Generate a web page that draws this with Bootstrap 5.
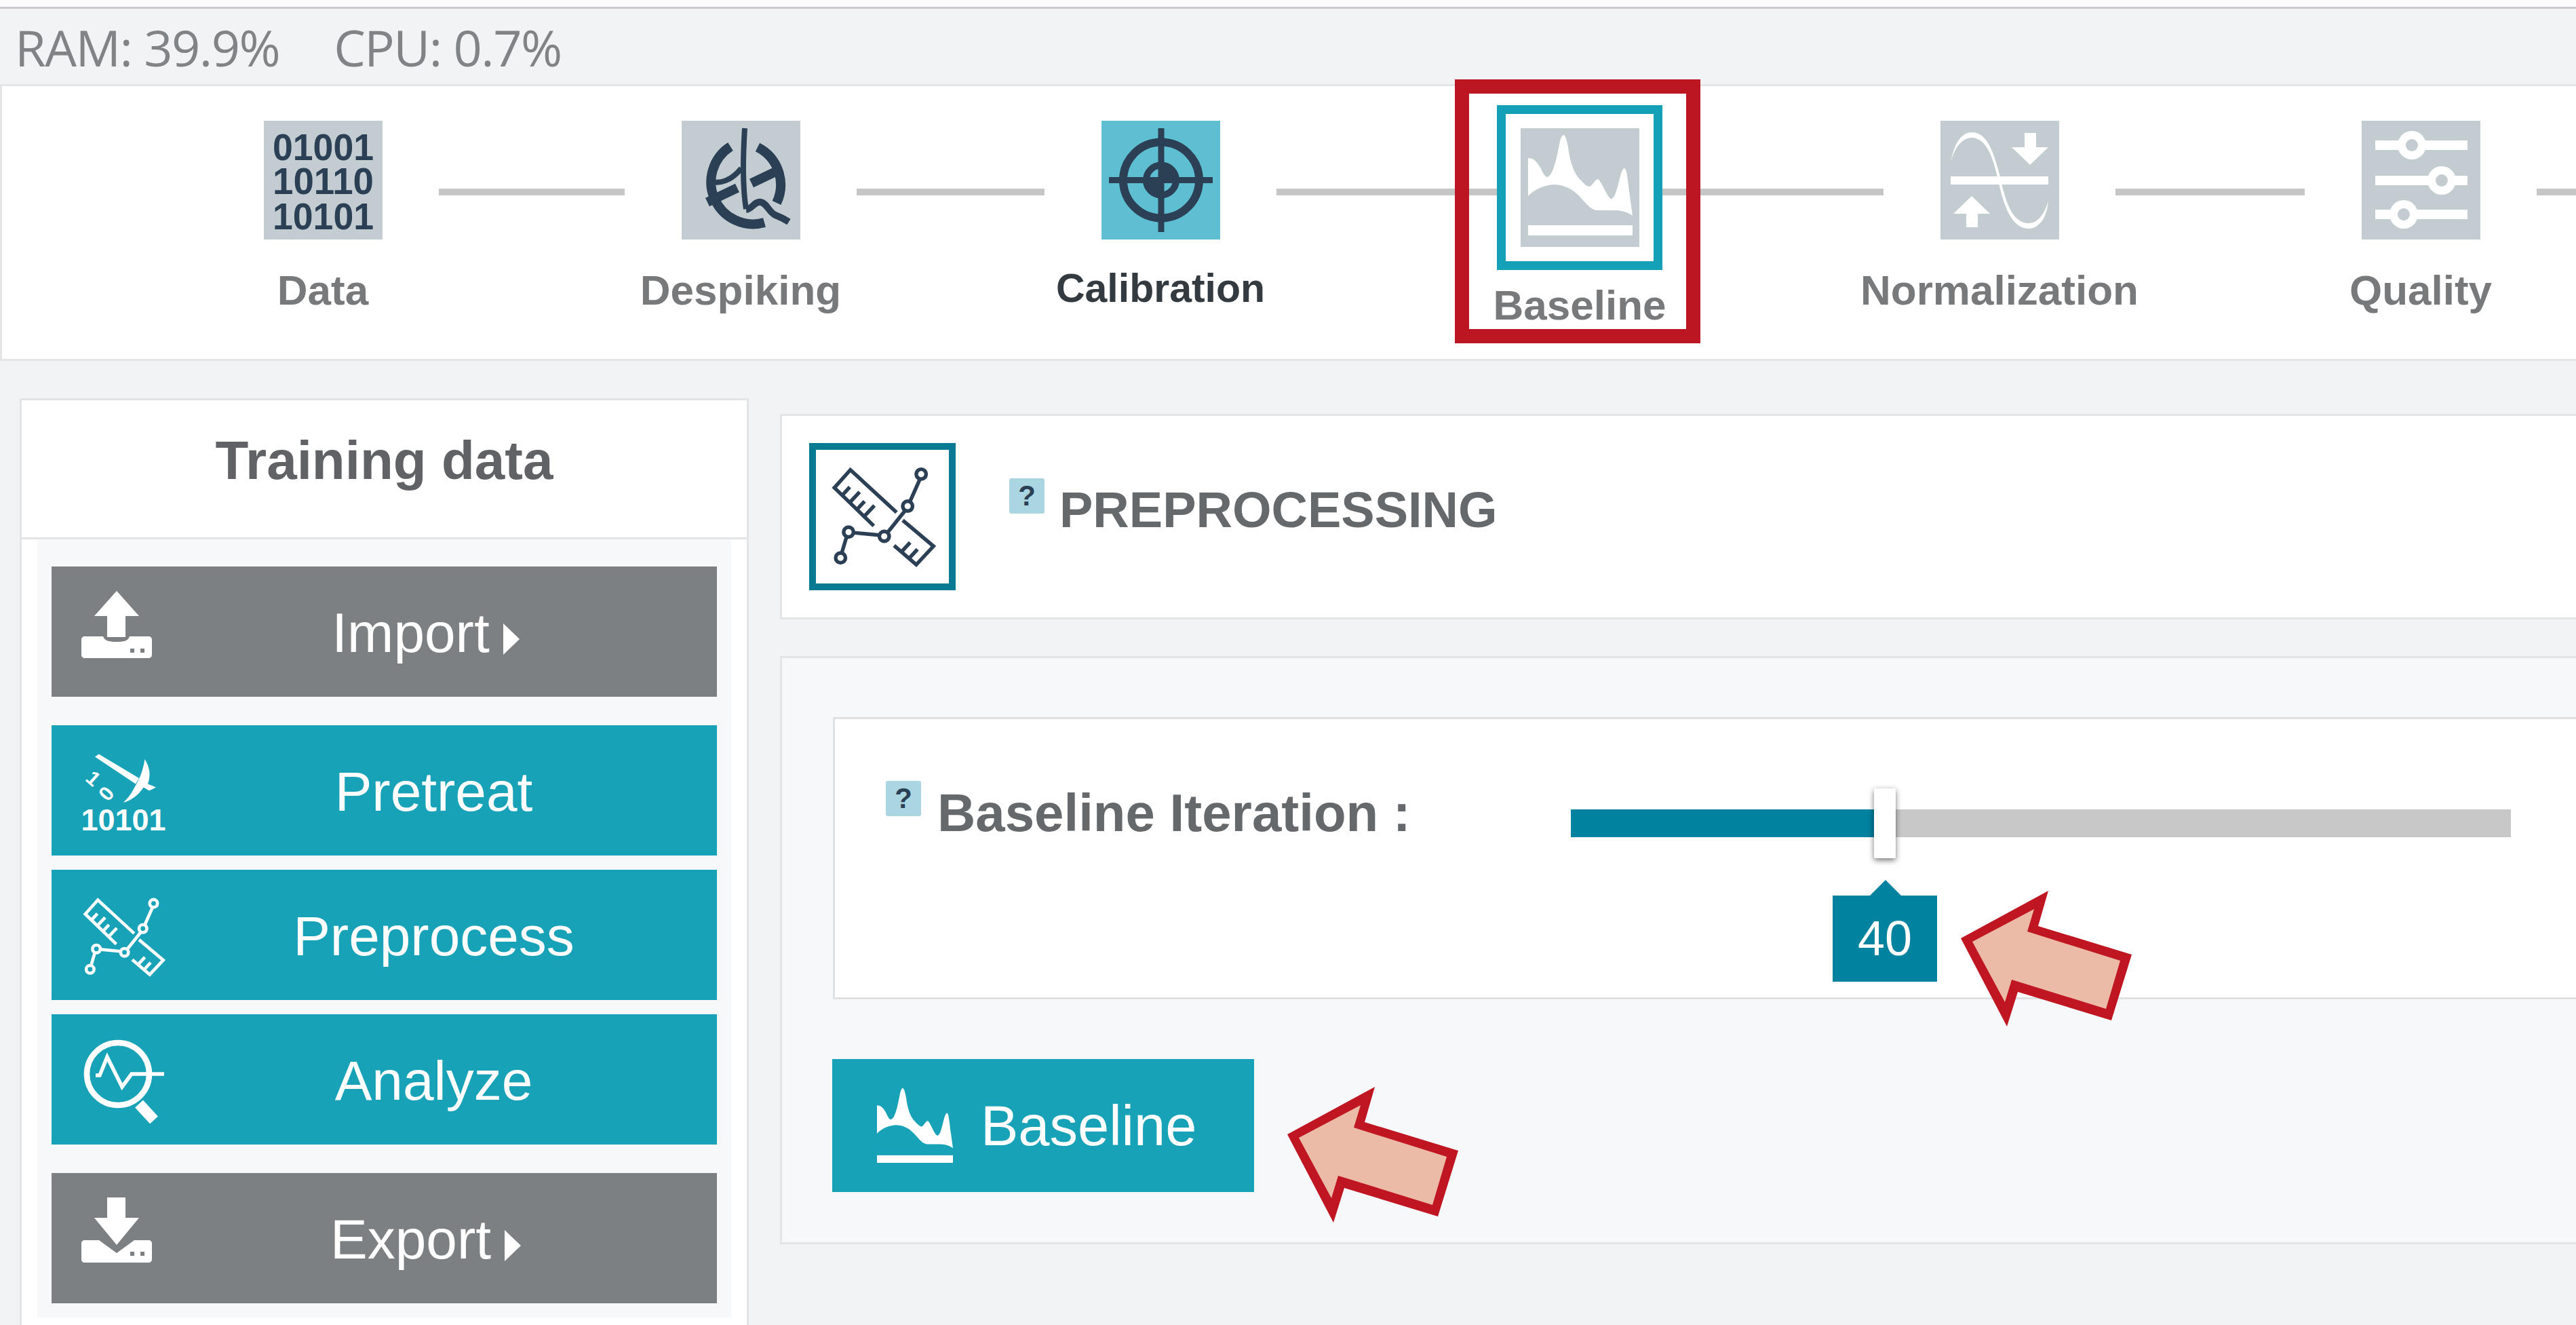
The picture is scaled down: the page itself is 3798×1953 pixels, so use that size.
<!DOCTYPE html>
<html lang="en">
<head>
<meta charset="utf-8">
<title>Preprocessing</title>
<link href="https://cdn.jsdelivr.net/npm/bootstrap@5.3.0/dist/css/bootstrap.min.css" rel="stylesheet">
<style>
html,body{width:3798px;height:1953px;overflow:hidden}
body{background:#f2f3f5;font-family:"Liberation Sans",Arial,sans-serif;color:#66696c}
.top-strip{height:13px;background:#fbfbfc;border-bottom:3px solid #cbcbcd}
.status-bar{height:111px;padding:4px 0 0 22px;font-family:"Open Sans",sans-serif;font-size:74px;line-height:105px;color:#818486;letter-spacing:-1.5px;white-space:nowrap}
.status-bar span+span{margin-left:80px}
.stepper{height:408px;background:#fff;border:solid #e4e5e7;border-width:3px 0 3px 3px;padding-left:302px}
.step{flex:none;width:342px;padding-top:51px;position:relative}
.step-ico{width:175px;height:175px;display:block;margin:0 auto}
.step-label{font-weight:700;font-size:62px;line-height:1;margin:44px -80px 0;text-align:center;color:#77797b;white-space:nowrap}
.step-active .step-label{color:#333a40;font-size:59px;margin-top:43px}
.step-now{width:244px;padding-top:28px}
.step-frame{width:244px;height:243px;border:13px solid #14a1b8;display:flex;align-items:center;justify-content:center;background:#fff}
.step-now .step-label{margin-top:21px}
.wire{flex:none;height:10px;margin-top:151px;background:#c6c6c6}
.red-box{position:absolute;left:-62px;top:-10px;width:362px;height:389px;border:21px solid #bb1622;pointer-events:none}
.work{height:1421px;padding:55px 0 0 29px;gap:46px;overflow:hidden}
.side-card{flex:none;width:1075px;height:1400px;border:3px solid #e3e4e6;border-radius:0;background:#fff}
.side-card .card-header{height:205px;padding:49px 0 0;background:#fff;border-bottom:3px solid #e3e4e6;border-radius:0!important;font-weight:700;font-size:80px;line-height:1;color:#606265;text-align:center}
.side-card .card-body{padding:0 23px}
.side-panel{background:#f7f8fa;padding:40px 21px 21px}
.side-btn{display:flex;align-items:center;width:100%;height:192px;padding:4px 38px 0 44px;border:0;border-radius:0;color:#fff;font-size:82px;line-height:1;font-family:"Liberation Sans",Arial,sans-serif}
.side-btn:hover{color:#fff}
.tint-teal,.tint-teal:hover{background:#17a2b8}
.tint-gray,.tint-gray:hover{background:#7c8082}
.side-btn.has-caret{padding-right:62px}
.side-slot{flex:none;width:140px;height:125px;display:block}
.side-slot.side-slot-tall{height:135px}
.side-text{flex:1;text-align:center}
.side-caret{display:inline-block;margin-left:20px;border-left:24px solid #fff;border-top:23px solid transparent;border-bottom:23px solid transparent;vertical-align:-4px}
.gap-wide{margin-top:42px}
.gap-tight{margin-top:21px}
.main-col{flex:1;min-width:0;padding-top:23px}
.head-card{height:303px;background:#fff;border:solid #e3e4e6;border-width:3px 0 3px 3px;padding:40px 0 0 40px}
.head-frame{flex:none;width:216px;height:217px;border:10px solid #087a92;background:#fff;display:block;color:#2b3f55}
.hint{flex:none;width:52px;height:52px;background:#a9d6e0;border-radius:3px;color:#2b3f55;font-weight:700;font-size:42px;line-height:52px;text-align:center}
.head-hint{margin:52px 0 0 79px}
.head-title{font-weight:700;font-size:74px;line-height:1;margin:62px 0 0 22px;color:#66696c}
.work-panel{margin-top:54px;height:867px;background:#f7f8fa;border:solid #e3e4e6;border-width:3px 0 3px 3px;padding:87px 0 0 75px}
.opt-card{height:416px;background:#fff;border:solid #e0e1e3;border-width:3px 0 3px 3px}
.opt-left{flex:none;width:1085px;padding:91px 0 0 75px}
.opt-label{font-weight:700;font-size:78px;line-height:1;margin:8px 0 0 24px;color:#66696c;white-space:nowrap}
.slide-wrap{flex:none;width:1386px;height:41px;margin-top:133px;position:relative}
.slide-wrap .progress{height:41px;border-radius:0;background:#c8c8c8}
.slide-wrap .progress-bar{background:#01829e}
.slide-handle{position:absolute;left:447px;top:-31px;width:32px;height:103px;background:#fff;border-radius:2px;box-shadow:0 3px 9px rgba(0,0,0,.55)}
.slide-tip{position:absolute;left:386px;top:127px;width:154px;height:127px;background:#01829e;color:#fff;font-size:72px;line-height:127px;text-align:center}
.slide-tip::before{content:"";position:absolute;left:55px;top:-23px;border-left:23px solid transparent;border-right:23px solid transparent;border-bottom:23px solid #01829e}
.run-btn{display:flex;align-items:center;width:622px;height:196px;margin:88px 0 0 -1px;padding:0 0 0 66px;border:0;border-radius:0;background:#17a2b8;color:#fff;font-size:83px;line-height:1;font-family:"Liberation Sans",Arial,sans-serif}
.run-btn:hover{background:#17a2b8;color:#fff}
.run-ico{flex:none;width:112px;height:110px;margin-right:41px;display:block}
.callout{position:absolute;width:260px;height:215px;z-index:5}
.callout-a{left:1890px;top:1595px}
.callout-b{left:2883px;top:1306px}
</style>
</head>
<body class="position-relative">

<svg width="0" height="0" class="d-none">
  <defs>
    <symbol id="peak-shape" viewBox="0 0 175 175">
      <path fill="#fff" d="M11 44C20 44 24 50 29 58C33 66 36 72 39 72C47 70 52 50 57 24C59 14 61 10 63 10C66 10 68 18 70 28C73 50 78 66 88 76C93 81 97 86 102 86C106 84 110 75 114 75C119 77 128 104 134 104C143 102 146 60 153 59C157 60 158 80 161 100L165 129C160 125 150 121 139 121L112 121C100 119 92 104 82 96C72 87 60 83 49 83C35 84 20 90 11 100Z"/>
      <rect x="11" y="143" width="154" height="15" fill="#fff"/>
    </symbol>
    <symbol id="ruler-graph" viewBox="0 0 216 216">
      <g fill="none" stroke="currentColor" stroke-linejoin="miter">
        <path d="M131 101L56 32L30 61L94 123"/>
        <path d="M141 114L191 156L163 186L127 155"/>
        <path d="M43 73L55 60M55 85L71 68M67 96L79 83M79 107L95 90"/>
        <path d="M140 164L153 150M152 175L165 161"/>
        <path d="M169 47L153 83M145 98L117 133M103 138L61 134M50 140L42 167"/>
        <circle cx="171" cy="39" r="8"/><circle cx="149" cy="91" r="8"/><circle cx="111" cy="140" r="8"/><circle cx="53" cy="133" r="8"/><circle cx="40" cy="175" r="8"/>
      </g>
    </symbol>
  </defs>
</svg>

<div class="top-strip"></div>
<div class="status-bar"><span>RAM: 39.9%</span><span>CPU: 0.7%</span></div>

<div class="stepper d-flex align-items-start">
  <div class="step">
    <svg class="step-ico" viewBox="0 0 175 175">
      <rect width="175" height="175" fill="#c3ccd1"/>
      <g fill="#2b3f55" font-family="Liberation Sans, sans-serif" font-weight="700" font-size="56">
        <text x="13" y="58" textLength="149" lengthAdjust="spacingAndGlyphs">01001</text>
        <text x="13" y="108" textLength="149" lengthAdjust="spacingAndGlyphs">10110</text>
        <text x="13" y="160" textLength="149" lengthAdjust="spacingAndGlyphs">10101</text>
      </g>
    </svg>
    <div class="step-label">Data</div>
  </div>
  <div class="wire" style="width:274px"></div>
  <div class="step">
    <svg class="step-ico" viewBox="0 0 175 175">
      <rect width="175" height="175" fill="#c3ccd1"/>
      <g fill="none" stroke="#2b3f55" stroke-linecap="butt">
        <path stroke-width="14" d="M72 38A62 62 0 0 0 122 150"/>
        <path stroke-width="14" d="M112 39A62 62 0 0 1 140 121"/>
        <path stroke-width="14" d="M38 120L82 99M103 92L147 71"/>
        <path stroke-width="8" d="M42 89C56 94 74 88 88 70"/>
        <path stroke-width="8" d="M93 11C90 60 90 100 95 130"/>
        <path stroke-width="10" stroke-linejoin="round" d="M95 131C104 130 108 118 117 120C126 122 128 134 138 139C146 142 150 144 158 149"/>
      </g>
    </svg>
    <div class="step-label">Despiking</div>
  </div>
  <div class="wire" style="width:277px"></div>
  <div class="step step-active">
    <svg class="step-ico" viewBox="0 0 175 175">
      <rect width="175" height="175" fill="#5fbfd2"/>
      <g fill="none" stroke="#2b3f55">
        <circle cx="88" cy="87.5" r="56" stroke-width="12"/>
        <circle cx="88" cy="87.5" r="22" stroke-width="10"/>
        <path stroke-width="9" d="M88 11V164M11 87.5H164"/>
      </g>
      <path fill="#2b3f55" d="M88 87.5V65A22 22 0 0 1 110 87.5ZM88 87.5V110A22 22 0 0 1 66 87.5Z"/>
    </svg>
    <div class="step-label">Calibration</div>
  </div>
  <div class="wire" style="width:325px"></div>
  <div class="step step-now">
    <div class="step-frame">
      <svg class="step-ico" viewBox="0 0 175 175">
        <rect width="175" height="175" fill="#c3ccd1"/>
        <use href="#peak-shape" width="175" height="175"/>
      </svg>
    </div>
    <div class="step-label">Baseline</div>
    <div class="red-box"></div>
  </div>
  <div class="wire" style="width:326px"></div>
  <div class="step">
    <svg class="step-ico" viewBox="0 0 175 175">
      <rect width="175" height="175" fill="#c3ccd1"/>
      <rect x="15" y="82" width="144" height="12" fill="#fff"/>
      <path fill="#fff" d="M15 62C20 32 32 17 46 17C70 17 80 50 89 87.5C97 125 108 151 130 151C144 151 154 136 159 118C157 142 146 159 130 159C105 159 93 125 85 87.5C77 50 66 25 46 25C32 25 20 40 15 62Z"/>
      <path fill="#fff" d="M124 18H141V39H159L132 65L105 39H124ZM46 111L73 137H55V157H38V137H19Z"/>
    </svg>
    <div class="step-label">Normalization</div>
  </div>
  <div class="wire" style="width:279px"></div>
  <div class="step">
    <svg class="step-ico" viewBox="0 0 175 175">
      <rect width="175" height="175" fill="#c3ccd1"/>
      <g fill="#fff">
        <rect x="20" y="29" width="136" height="14"/><rect x="20" y="81" width="136" height="14"/><rect x="20" y="131" width="136" height="14"/>
        <circle cx="74" cy="36" r="21"/><circle cx="118" cy="88" r="21"/><circle cx="62" cy="138" r="21"/>
      </g>
      <g fill="#c3ccd1"><circle cx="74" cy="36" r="9"/><circle cx="118" cy="88" r="9"/><circle cx="62" cy="138" r="9"/></g>
    </svg>
    <div class="step-label">Quality</div>
  </div>
  <div class="wire flex-grow-1"></div>
</div>

<div class="work d-flex align-items-start">
  <div class="card side-card">
    <div class="card-header">Training data</div>
    <div class="card-body">
      <div class="side-panel">
        <button class="btn side-btn tint-gray has-caret" type="button">
          <svg class="side-slot" viewBox="0 0 140 125">
            <path fill="#fff" d="M52 0L85 37H65V68H38V37H19Z"/>
            <path fill="#fff" d="M5 67H32C34 74 42 75 52 75C62 75 69 74 71 67H99C102 67 104 69 104 72V94C104 97 102 99 99 99H5C2 99 0 97 0 94V72C0 69 2 67 5 67Z"/>
            <rect x="72" y="85" width="6" height="6" fill="#7c8082"/><rect x="87" y="85" width="6" height="6" fill="#7c8082"/>
          </svg>
          <span class="side-text">Import<span class="side-caret"></span></span>
        </button>
        <button class="btn side-btn tint-teal gap-wide" type="button">
          <svg class="side-slot side-slot-tall" viewBox="0 -5 140 135">
            <g fill="#fff">
              <path d="M20 10.5L25.7 6.5L85 42L80 50.5Z"/>
              <path d="M93.3 14C100 24 103 36 98 50.5L110 55.5L100 60.5L91.7 55.5C85 66 74 75 61.7 78C68 72 73 66 77 58L83 47C87 40 92 26 93.3 14Z"/>
              <g font-family="Liberation Sans, sans-serif" font-weight="700" text-anchor="middle">
                <text transform="translate(18 42) rotate(42)" y="11" font-size="30">1</text>
                <text transform="translate(37 65) rotate(-50)" y="10" font-size="30">0</text>
                <text x="62" y="119" font-size="45">10101</text>
              </g>
            </g>
          </svg>
          <span class="side-text">Pretreat</span>
        </button>
        <button class="btn side-btn tint-teal gap-tight" type="button">
          <svg class="side-slot" viewBox="22 20 196 175" preserveAspectRatio="xMinYMid meet"><use href="#ruler-graph" width="216" height="216" color="#fff" stroke-width="6.5"/></svg>
          <span class="side-text">Preprocess</span>
        </button>
        <button class="btn side-btn tint-teal gap-tight" type="button">
          <svg class="side-slot" viewBox="0 0 140 125">
            <g fill="none" stroke="#fff">
              <circle cx="54" cy="52" r="46" stroke-width="8.5"/>
              <path stroke-width="5.5" d="M21 54H27L38 27L60 71L74 52H96M104 52H122"/>
              <path stroke-width="16" d="M85 96L107 120"/>
            </g>
          </svg>
          <span class="side-text">Analyze</span>
        </button>
        <button class="btn side-btn tint-gray has-caret gap-wide" type="button">
          <svg class="side-slot" viewBox="0 0 140 125">
            <path fill="#fff" d="M38 0H65V30H85L52 70L19 30H38Z"/>
            <path fill="#fff" d="M5 63H26L52 82L78 63H99C102 63 104 65 104 68V91C104 94 102 96 99 96H5C2 96 0 94 0 91V68C0 65 2 63 5 63Z"/>
            <rect x="72" y="80" width="6" height="6" fill="#7c8082"/><rect x="87" y="80" width="6" height="6" fill="#7c8082"/>
          </svg>
          <span class="side-text">Export<span class="side-caret"></span></span>
        </button>
      </div>
    </div>
  </div>

  <div class="main-col">
    <div class="head-card d-flex align-items-start">
      <svg class="head-frame" viewBox="0 0 216 216"><use href="#ruler-graph" width="216" height="216" stroke-width="6"/></svg>
      <div class="hint head-hint">?</div>
      <div class="head-title">PREPROCESSING</div>
    </div>
    <div class="work-panel">
      <div class="opt-card d-flex align-items-start">
        <div class="opt-left d-flex align-items-start">
          <div class="hint">?</div>
          <div class="opt-label">Baseline Iteration :</div>
        </div>
        <div class="slide-wrap">
          <div class="progress"><div class="progress-bar" style="width:32.3%"></div></div>
          <div class="slide-handle"></div>
          <div class="slide-tip">40</div>
        </div>
      </div>
      <button class="btn run-btn" type="button">
        <svg class="run-ico" viewBox="11 10 154 148" preserveAspectRatio="none"><use href="#peak-shape" width="175" height="175"/></svg>
        Baseline
      </button>
    </div>
  </div>
</div>

<svg class="callout callout-a" viewBox="1890 1595 260 215"><polygon fill="#bf1622" points="1898,1672 2027,1602 2012,1654 2150,1696 2120,1793 1982,1751 1966,1802"/><polygon fill="#ebbba8" points="1915,1677 2006,1629 1996,1662 2133,1705 2112,1776 1973,1733 1963,1766"/></svg>
<svg class="callout callout-b" viewBox="1890 1595 260 215"><polygon fill="#bf1622" points="1898,1672 2027,1602 2012,1654 2150,1696 2120,1793 1982,1751 1966,1802"/><polygon fill="#ebbba8" points="1915,1677 2006,1629 1996,1662 2133,1705 2112,1776 1973,1733 1963,1766"/></svg>

</body>
</html>
